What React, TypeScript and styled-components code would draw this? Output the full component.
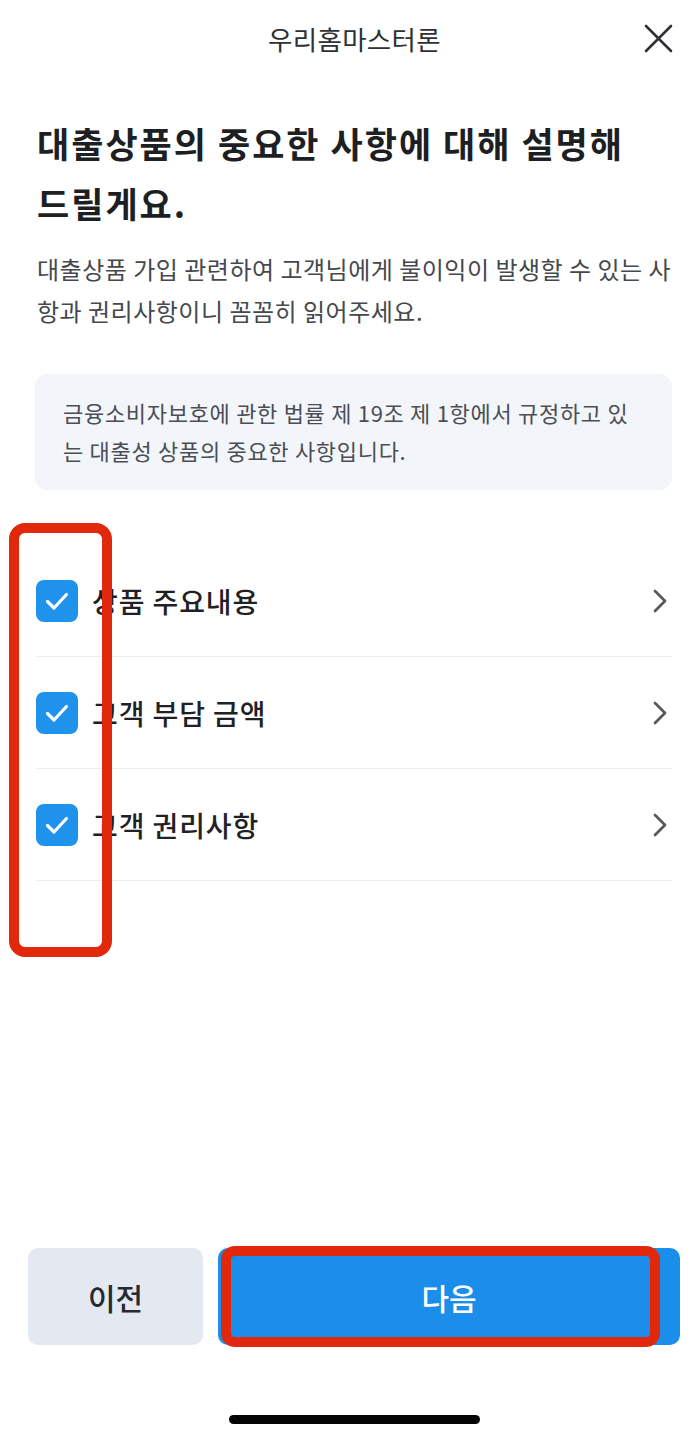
import styled, { createGlobalStyle } from 'styled-components';

const GlobalStyle = createGlobalStyle`
  html, body {
    margin: 0;
    padding: 0;
    background: #fff;
  }
  body {
    font-family: 'Noto Sans CJK KR', 'Noto Sans', sans-serif;
    color: #222;
  }
`;

const Page = styled.div`
  width: 699px;
  min-height: 1440px;
  display: flex;
  flex-direction: column;
  box-sizing: border-box;
`;

const Header = styled.header`
  height: 76px;
  display: flex;
  align-items: center;
  justify-content: center;
  padding-left: 10px;
  position: relative;
`;

const HeaderTitle = styled.h1`
  margin: 0;
  font-size: 26.5px;
  font-weight: 400;
  letter-spacing: 0.3px;
  color: #2e3135;
`;

const CloseButton = styled.button`
  position: absolute;
  right: 26px;
  top: 24px;
  width: 29px;
  height: 29px;
  padding: 0;
  border: 0;
  background: none;
  display: flex;
`;

const Content = styled.main`
  flex: 1;
  padding: 37px 27px 0 35px;
`;

const Title = styled.h2`
  margin: 0;
  padding-left: 2px;
  font-size: 35px;
  line-height: 60px;
  font-weight: 700;
  letter-spacing: 2px;
  color: #1d1f22;
  white-space: nowrap;
`;

const Description = styled.p`
  margin: 15px 0 0;
  padding-left: 2px;
  font-size: 24px;
  line-height: 42px;
  letter-spacing: 0.5px;
  color: #45484d;
  white-space: nowrap;
`;

const InfoBox = styled.div`
  margin-top: 42px;
  padding: 19px 28px 21px;
  background: #f2f5f9;
  border-radius: 12px;
  font-size: 22px;
  line-height: 38px;
  letter-spacing: 0.7px;
  color: #4b4e54;
  white-space: nowrap;
`;

const List = styled.ul`
  list-style: none;
  margin: 55px 0 0;
  padding: 0;
  position: relative;
`;

const Row = styled.li`
  height: 111px;
  display: flex;
  align-items: center;
  border-bottom: 1px solid #eceef1;
  padding-left: 1px;
`;

const CheckBox = styled.span`
  width: 42px;
  height: 42px;
  border-radius: 8px;
  background: #1f92ec;
  display: flex;
  align-items: center;
  justify-content: center;
  flex-shrink: 0;
`;

const RowLabel = styled.span`
  flex: 1;
  margin-left: 14px;
  font-size: 28px;
  font-weight: 500;
  color: #1f2124;
  letter-spacing: 0.9px;
`;

const Chevron = styled.span`
  display: flex;
  margin-right: 4px;
`;

const Highlight = styled.div<{ $radius: number }>`
  position: absolute;
  border: 10px solid #e2280c;
  border-radius: ${(p) => p.$radius}px;
  box-sizing: border-box;
  pointer-events: none;
`;

const ListHighlight = styled(Highlight)`
  left: -26px;
  top: -22px;
  width: 103px;
  height: 434px;
`;

const Footer = styled.footer`
  display: flex;
  flex-direction: column;
  align-items: center;
`;

const ButtonBar = styled.div`
  width: 100%;
  box-sizing: border-box;
  display: flex;
  gap: 15px;
  padding: 0 19px 0 28px;
`;

const ActionButton = styled.button<{ $primary?: boolean }>`
  position: relative;
  height: 97px;
  border: 0;
  border-radius: 10px;
  font-family: 'Noto Sans CJK KR', 'Noto Sans', sans-serif;
  font-size: 30px;
  font-weight: 500;
  background: ${(p) => (p.$primary ? '#1a8eea' : '#e4e9f1')};
  color: ${(p) => (p.$primary ? '#fff' : '#26292d')};
  flex: ${(p) => (p.$primary ? '1' : '0 0 175px')};
`;

const ButtonHighlight = styled(Highlight)`
  left: 3px;
  top: -2px;
  right: 20px;
  bottom: -2px;
`;

const HomeIndicator = styled.div`
  width: 251px;
  height: 9px;
  border-radius: 5px;
  background: #050505;
  margin: 70px 0 16px 10px;
`;

const items = ['상품 주요내용', '고객 부담 금액', '고객 권리사항'];

export default function App() {
  return (
    <>
      <GlobalStyle />
      <Page>
        <Header>
          <HeaderTitle>우리홈마스터론</HeaderTitle>
          <CloseButton aria-label="닫기">
            <svg width="29" height="29" viewBox="0 0 29 29">
              <path
                d="M2 2 L27 27 M27 2 L2 27"
                stroke="#2e3135"
                strokeWidth="2.6"
                strokeLinecap="round"
              />
            </svg>
          </CloseButton>
        </Header>
        <Content>
          <Title>
            대출상품의 중요한 사항에 대해 설명해
            <br />
            드릴게요.
          </Title>
          <Description>
            대출상품 가입 관련하여 고객님에게 불이익이 발생할 수 있는 사
            <br />
            항과 권리사항이니 꼼꼼히 읽어주세요.
          </Description>
          <InfoBox>
            금융소비자보호에 관한 법률 제 19조 제 1항에서 규정하고 있
            <br />는 대출성 상품의 중요한 사항입니다.
          </InfoBox>
          <List>
            {items.map((label) => (
              <Row key={label}>
                <CheckBox>
                  <svg width="42" height="42" viewBox="0 0 42 42">
                    <path
                      d="M11.5 21.5 L18 28 L30.5 14.5"
                      fill="none"
                      stroke="#fff"
                      strokeWidth="3.2"
                      strokeLinecap="round"
                      strokeLinejoin="round"
                    />
                  </svg>
                </CheckBox>
                <RowLabel>{label}</RowLabel>
                <Chevron>
                  <svg width="16" height="24" viewBox="0 0 16 24">
                    <path
                      d="M3 2 L13 12 L3 22"
                      fill="none"
                      stroke="#55585d"
                      strokeWidth="2.8"
                      strokeLinecap="round"
                      strokeLinejoin="round"
                    />
                  </svg>
                </Chevron>
              </Row>
            ))}
            <ListHighlight $radius={16} />
          </List>
        </Content>
        <Footer>
          <ButtonBar>
            <ActionButton>이전</ActionButton>
            <ActionButton $primary>
              다음
              <ButtonHighlight $radius={14} />
            </ActionButton>
          </ButtonBar>
          <HomeIndicator />
        </Footer>
      </Page>
    </>
  );
}
